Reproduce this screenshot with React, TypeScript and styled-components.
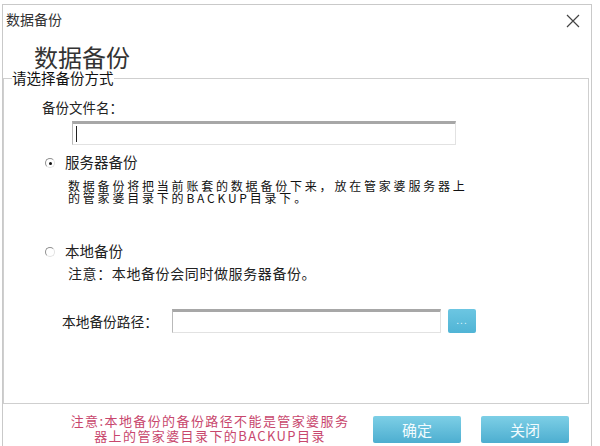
import React from 'react';
import styled, { createGlobalStyle } from 'styled-components';

const GlobalStyle = createGlobalStyle`
  html, body {
    margin: 0;
    padding: 0;
    background: #ffffff;
  }
  body {
    font-family: "Noto Sans CJK SC", "Noto Sans", sans-serif;
    color: #222;
  }
`;

const Window = styled.div`
  box-sizing: border-box;
  width: 590px;
  height: 442px;
  margin: 4px 0 0 2px;
  border: 1px solid #c9c9c9;
  border-bottom: 0;
  display: flex;
  flex-direction: column;
  overflow: hidden;
`;

const Header = styled.div`
  height: 65px;
  display: flex;
  flex-direction: column;
`;

const TitleBar = styled.div`
  display: flex;
  justify-content: space-between;
  align-items: center;
  padding: 4px 10px 0 3px;
  font-size: 14px;
  line-height: 18px;
  color: #333;
`;

const CloseButton = styled.button`
  width: 16px;
  height: 16px;
  padding: 0;
  border: 0;
  background: none;
  display: flex;
  align-items: center;
  justify-content: center;
  margin-top: 4px;
`;

const BigTitle = styled.h1`
  margin: 14px 0 0 31px;
  font-size: 24px;
  line-height: 28px;
  font-weight: 400;
  color: #333;
`;

const Group = styled.fieldset`
  box-sizing: border-box;
  margin: 0 2px 0 0;
  padding: 0;
  height: 334px;
  border: 1px solid #cfcfcf;
  display: flex;
  flex-direction: column;
`;

const Legend = styled.legend`
  margin-left: 8px;
  padding: 0;
  font-size: 14.5px;
  line-height: 16px;
  color: #111;
`;

const FieldLabel = styled.div`
  margin: 12px 0 0 38px;
  font-size: 13.5px;
  line-height: 18px;
  color: #222;
`;

const TextBox = styled.div<{ width: number }>`
  box-sizing: border-box;
  width: ${p => p.width}px;
  height: 24px;
  border: 1px solid #e2e2e2;
  border-top: 3px solid #a7a7a7;
  border-left: 1px solid #b9b9b9;
  background: #fff;
  display: flex;
  align-items: center;
  padding-left: 3px;
`;

const NameBox = styled(TextBox)`
  margin: 5px 0 0 68px;
`;

const Caret = styled.span`
  width: 1px;
  height: 16px;
  background: #222;
`;

const RadioRow = styled.label<{ top: number }>`
  display: flex;
  align-items: center;
  margin: ${p => p.top}px 0 0 41px;
  font-size: 14.5px;
  line-height: 18px;
  color: #222;
`;

const Radio = styled.span<{ checked?: boolean }>`
  box-sizing: border-box;
  width: 10px;
  height: 10px;
  border-radius: 50%;
  border: 1.5px solid #8f8f8f;
  border-right-color: #e2e2e2;
  border-bottom-color: #e2e2e2;
  margin: 2px 10px 0 0;
  display: flex;
  align-items: center;
  justify-content: center;
  &::after {
    content: '';
    width: 3px;
    height: 3px;
    border-radius: 50%;
    background: ${p => (p.checked ? '#111' : 'transparent')};
  }
`;

const Description = styled.div`
  margin: 9px 0 0 64px;
  font-family: "Noto Sans CJK SC", "DejaVu Sans", sans-serif;
  font-size: 12px;
  letter-spacing: 2.8px;
  line-height: 12px;
  color: #111;
`;

const Note = styled.div`
  margin: 4px 0 0 64px;
  font-size: 14px;
  letter-spacing: 0.6px;
  line-height: 18px;
  color: #222;
`;

const PathRow = styled.div`
  display: flex;
  align-items: center;
  margin: 27px 0 0 58px;
`;

const PathLabel = styled.span`
  font-size: 13.7px;
  line-height: 18px;
  width: 110px;
  color: #222;
`;

const BrowseButton = styled.button`
  width: 28px;
  height: 24px;
  margin-left: 7px;
  padding: 0;
  border: 0;
  border-radius: 2px;
  background: linear-gradient(#6cc6e2, #50b4d5);
  color: #dff4fa;
  font-size: 10px;
  letter-spacing: 1px;
  line-height: 24px;
`;

const Footer = styled.div`
  display: flex;
  align-items: flex-start;
  padding: 9px 0 0 57px;
`;

const Warning = styled.div`
  width: 300px;
  text-align: center;
  font-size: 13px;
  letter-spacing: 1.4px;
  line-height: 15px;
  color: #c8476d;
`;

const ActionButton = styled.button<{ gap: number }>`
  width: 88px;
  height: 27px;
  margin: 3px 0 0 ${p => p.gap}px;
  border: 0;
  border-radius: 2px;
  background: linear-gradient(#7dcfe6, #4daed0);
  color: #f2fbfe;
  font-family: "Noto Sans CJK SC", sans-serif;
  font-size: 15px;
  line-height: 27px;
  padding: 0;
`;

export default function App() {
  return (
    <>
      <GlobalStyle />
      <Window>
        <Header>
          <TitleBar>
            <span>数据备份</span>
            <CloseButton aria-label="关闭">
              <svg width="14" height="14" viewBox="0 0 14 14">
                <path d="M1 1 L13 13 M13 1 L1 13" stroke="#444" strokeWidth="1.2" fill="none" />
              </svg>
            </CloseButton>
          </TitleBar>
          <BigTitle>数据备份</BigTitle>
        </Header>
        <Group>
          <Legend>请选择备份方式</Legend>
          <FieldLabel>备份文件名：</FieldLabel>
          <NameBox width={384}>
            <Caret />
          </NameBox>
          <RadioRow top={8}>
            <Radio checked />
            服务器备份
          </RadioRow>
          <Description>
            数据备份将把当前账套的数据备份下来，放在管家婆服务器上
            <br />
            的管家婆目录下的BACKUP目录下。
          </Description>
          <RadioRow top={38}>
            <Radio />
            本地备份
          </RadioRow>
          <Note>注意：本地备份会同时做服务器备份。</Note>
          <PathRow>
            <PathLabel>本地备份路径：</PathLabel>
            <TextBox width={269} />
            <BrowseButton>...</BrowseButton>
          </PathRow>
        </Group>
        <Footer>
          <Warning>
            注意:本地备份的备份路径不能是管家婆服务
            <br />
            器上的管家婆目录下的BACKUP目录
          </Warning>
          <ActionButton gap={13}>确定</ActionButton>
          <ActionButton gap={20}>关闭</ActionButton>
        </Footer>
      </Window>
    </>
  );
}
